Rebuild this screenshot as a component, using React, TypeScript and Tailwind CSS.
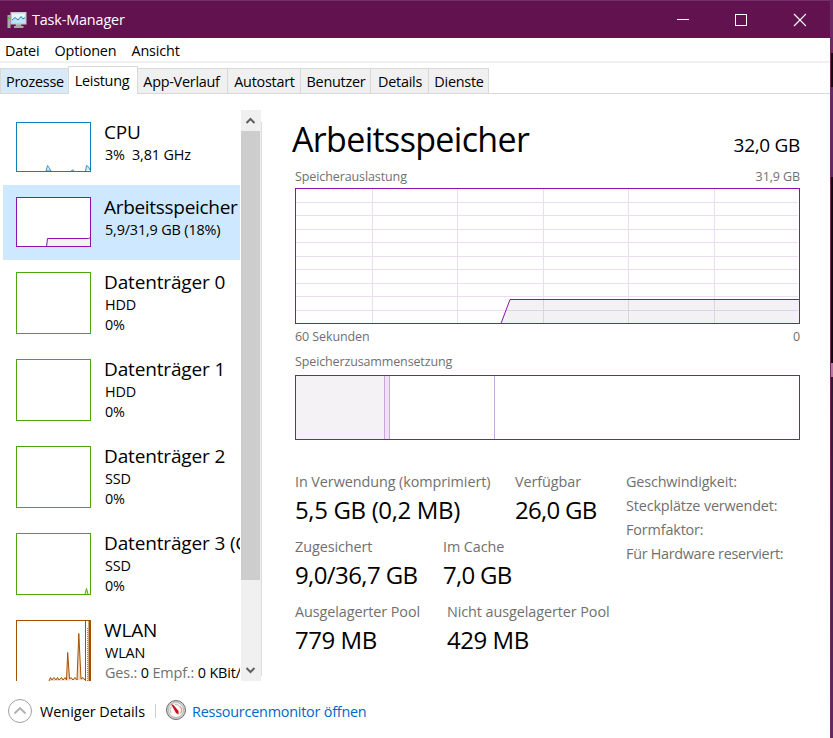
import React from "react";

type Device = {
  name: string;
  lines: React.ReactNode[];
  color: string;
  height: number;
  active?: boolean;
  graph?: React.ReactNode;
};

const menu = ["Datei", "Optionen", "Ansicht"];

const tabs = [
  { label: "Prozesse", style: "w-[68px] h-[25px] pt-[2px] pl-px border-l border-t bg-[#d8e9f8]" },
  { label: "Leistung", style: "w-[70px] h-[28px] pr-[2px] border-x border-t bg-white -mb-px" },
  { label: "App-Verlauf", style: "w-[90px] h-[25px] pt-[2px] pr-[2px] border-r border-t bg-[#f0f0f0]" },
  { label: "Autostart", style: "w-[73px] h-[25px] pt-[2px] pl-px border-r border-t bg-[#f0f0f0]" },
  { label: "Benutzer", style: "w-[70px] h-[25px] pt-[2px] pl-px border-r border-t bg-[#f0f0f0]" },
  { label: "Details", style: "w-[58px] h-[25px] pt-[2px] pl-px border-r border-t bg-[#f0f0f0]" },
  { label: "Dienste", style: "w-[60px] h-[25px] pt-[2px] pl-px border-r border-t bg-[#f0f0f0]" },
];

const devices: Device[] = [
  {
    name: "CPU",
    lines: ["3%  3,81 GHz"],
    color: "#117dbb",
    height: 50,
    graph: (
      <path d="M30 49 L31.5 43.5 L33 45.5 L35 49 Z M55 49 L57 47.8 L58 49 M69.5 49 L70.5 43.5 L73 45.5 L74 48" fill="#d5e8f4" stroke="#117dbb" strokeWidth="0.8" />
    ),
  },
  {
    name: "Arbeitsspeicher",
    lines: ["5,9/31,9 GB (18%)"],
    color: "#8b12ae",
    height: 50,
    active: true,
    graph: <path d="M30.5 49.5 L31.5 41.5 H72.5 L74.5 40.5 V49.5" fill="#f4f2f4" stroke="#8b12ae" />,
  },
  { name: "Datenträger 0", lines: ["HDD", "0%"], color: "#4da60c", height: 62 },
  { name: "Datenträger 1", lines: ["HDD", "0%"], color: "#4da60c", height: 62 },
  { name: "Datenträger 2", lines: ["SSD", "0%"], color: "#4da60c", height: 62 },
  {
    name: "Datenträger 3 (C:)",
    lines: ["SSD", "0%"],
    color: "#4da60c",
    height: 62,
    graph: <path d="M69 61 L70.5 55.5 L72 61" fill="#dcedce" stroke="#4da60c" />,
  },
  {
    name: "WLAN",
    lines: [
      "WLAN",
      <>
        <span className="text-[#707070]">Ges.:</span> 0 <span className="text-[#707070]">Empf.:</span> 0 KBit/s
      </>,
    ],
    color: "#a74f01",
    height: 62,
    graph: (
      <>
        <path
          d="M33 61 L34.5 57.5 L36 60 L38 57.5 L40 60 L41.5 57.5 L43 60 L45.5 57.5 L47 60 L49 57.5 L50.5 60 L51.7 32.5 L53.5 59 L55 57.5 L57 60 L59 57.5 L61 60 L62.8 13.5 L65 59 L67 57.5 L69 60"
          fill="#edd9c6"
          stroke="#a74f01"
        />
        <path d="M69.5 61 V0.5 H74" fill="none" stroke="#a74f01" />
        <path d="M71.5 61 V8" stroke="#d9693a" strokeDasharray="1 1" />
        <path d="M73.5 61 V1" stroke="#a74f01" strokeWidth="2" />
      </>
    ),
  },
];

const stats = [
  [
    { label: "In Verwendung (komprimiert)", value: "5,5 GB (0,2 MB)", width: "w-[220px]", spacing: "tracking-[-0.35px]" },
    { label: "Verfügbar", value: "26,0 GB", width: "", spacing: "tracking-[-0.7px]" },
  ],
  [
    { label: "Zugesichert", value: "9,0/36,7 GB", width: "w-[148px]", spacing: "tracking-[-0.6px]" },
    { label: "Im Cache", value: "7,0 GB", width: "", spacing: "tracking-[-0.7px]" },
  ],
  [
    { label: "Ausgelagerter Pool", value: "779 MB", width: "w-[152px]", spacing: "tracking-[-0.45px]" },
    { label: "Nicht ausgelagerter Pool", value: "429 MB", width: "", spacing: "tracking-[-0.45px]" },
  ],
];

const details = ["Geschwindigkeit:", "Steckplätze verwendet:", "Formfaktor:", "Für Hardware reserviert:"];

const TitleBar: React.FC = () => (
  <div className="flex h-[38px] items-center border-t border-[#74306a] bg-[#62124f] text-white">
    <svg width="20" height="18" viewBox="0 0 20 18" className="ml-[7px] shrink-0">
      <rect x="0.5" y="4" width="3" height="13" fill="#a9a9a9" />
      <rect x="1" y="6" width="2" height="2" fill="#3cd52e" />
      <path d="M9 13 h5 l0.5 2 h2 v2 h-9.500 v-2 h1.500 Z" fill="#a8a8a8" />
      <rect x="3.500" y="1" width="16" height="12.500" fill="#c9cccd" />
      <rect x="5" y="2.500" width="13" height="9.500" fill="#e9f7fc" />
      <path d="M5 9 L8 6.500 L11 9 L14 5.500 L16 8 L18 6.500 V12 H5 Z" fill="#bde3f5" />
      <path d="M5 9 L8 6.500 L11 9 L14 5.500 L16 8 L18 6.500" fill="none" stroke="#2383b8" />
    </svg>
    <span className="ml-[5px]">Task-Manager</span>
    <svg width="130" height="14" viewBox="0 0 130 14" className="mr-[24px] ml-auto" fill="none" stroke="white">
      <path d="M1 6.5 H13" />
      <rect x="59.500" y="1.500" width="11" height="11" />
      <path d="M118 1 L130 13 M130 1 L118 13" strokeWidth="1.2" />
    </svg>
  </div>
);

const DeviceItem: React.FC<{ device: Device }> = ({ device }) => (
  <div className={`flex shrink-0 pl-[13px] ${device.height === 50 ? "h-[75px]" : "h-[87px]"} ${device.active ? "bg-[#cde8ff]" : ""}`}>
    <svg width="75" height={device.height} className="mt-3 shrink-0 bg-white">
      {device.graph}
      <rect x="0.5" y="0.5" width="74" height={device.height - 1} fill="none" stroke={device.color} />
    </svg>
    <div className="ml-[13px] pt-[10px] whitespace-pre">
      <div className={`text-[19px] leading-6 ${device.active ? "tracking-[-0.3px]" : "tracking-[-0.15px]"}`}>{device.name}</div>
      {device.lines.map((line, i) => (
        <div key={i} className={`pl-px ${i === 0 ? "leading-[22px]" : "leading-[17px]"}`}>{line}</div>
      ))}
    </div>
  </div>
);

const ScrollBar: React.FC = () => (
  <div className="ml-px flex w-5 flex-col bg-[#f0f0f0]">
    <svg width="20" height="21" fill="none" stroke="#606060" strokeWidth="2">
      <path d="M5.500 13 L9.500 9 L13.500 13" />
    </svg>
    <div className="h-[449px] w-[19px] bg-[#cdcdcd]" />
    <svg width="20" height="21" className="mt-auto" fill="none" stroke="#606060" strokeWidth="2">
      <path d="M5.500 8 L9.500 12 L13.500 8" />
    </svg>
  </div>
);

const MemoryGraph: React.FC = () => (
  <svg width="505" height="136" className="block" fill="none">
    <g stroke="#ecdef0">
      {[14, 27, 41, 54, 68, 81, 95, 108, 122].map((y) => (
        <path key={y} d={`M1 ${y + 0.5} H503`} />
      ))}
      {[77, 162, 248, 333, 419].map((x) => (
        <path key={x} d={`M${x + 0.5} 1 V135`} />
      ))}
    </g>
    <path d="M206 135.5 L215 111.5 H504 V135.5 Z" fill="#2a1535" fillOpacity="0.06" />
    <path d="M206 135.5 L215 111.5 H504" stroke="#8b12ae" />
    <rect x="0.5" y="0.5" width="504" height="135" stroke="#8b12ae" />
  </svg>
);

const App: React.FC = () => {
  return (
    <div className="flex h-[738px] w-[833px] overflow-hidden bg-white font-['Open_Sans','Noto_Sans',sans-serif] text-[14.4px] leading-5 tracking-[-0.15px] text-black">
      <div className="flex w-[830px] flex-col">
        <TitleBar />
        <div className="flex h-[25px] gap-[15px] border-b-2 border-[#f0f0f0] pt-[3px] pl-[5px]">
          {menu.map((item) => (
            <span key={item}>{item}</span>
          ))}
        </div>

        {/* tabs */}
        <div className="flex h-[31px] items-end border-b border-[#d9d9d9]">
          {tabs.map((tab) => (
            <div key={tab.label} className={`flex shrink-0 items-center justify-center whitespace-nowrap border-[#d9d9d9] tracking-[-0.25px] ${tab.style}`}>
              {tab.label}
            </div>
          ))}
        </div>

        <div className="flex h-[587px] pt-4">
          {/* device list */}
          <div className="ml-[3px] flex w-[237px] flex-col overflow-hidden">
            {devices.map((device) => (
              <DeviceItem key={device.name} device={device} />
            ))}
          </div>
          <ScrollBar />
          <div className="mt-3 mb-[5px] w-px bg-[#dcdcdc]" />

          {/* memory */}
          <div className="ml-[33px] w-[505px]">
            <div className="flex h-[57px] items-baseline justify-between">
              <h1 className="-ml-[3px] text-[34px] leading-[58px] tracking-[-0.65px]">Arbeitsspeicher</h1>
              <span className="text-[19px] tracking-[-0.3px]">32,0 GB</span>
            </div>
            <div className="flex h-[21px] justify-between text-[12.5px] tracking-[-0.1px] text-[#707070]">
              <span>Speicherauslastung</span>
              <span>31,9 GB</span>
            </div>
            <MemoryGraph />
            <div className="mt-[3px] flex justify-between text-[12.5px] tracking-[-0.1px] text-[#707070]">
              <span>60 Sekunden</span>
              <span>0</span>
            </div>
            <div className="mt-[5px] h-[23px] text-[12.5px] tracking-[-0.13px] text-[#707070]">Speicherzusammensetzung</div>
            <div className="flex h-[65px] border border-[#8b12ae]">
              <div className="w-[88px] bg-[#f4f2f4]" />
              <div className="w-[6px] border-x border-[#cba9d6] bg-[#efe3f3]" />
              <div className="w-[105px] border-r border-[#cba9d6]" />
            </div>

            <div className="mt-[31px] flex whitespace-nowrap">
              <div className="w-[331px] shrink-0">
                {stats.map((row, i) => (
                  <div key={i} className="flex h-[65px]">
                    {row.map((stat) => (
                      <div key={stat.label} className={`shrink-0 ${stat.width}`}>
                        <div className="leading-[22px] tracking-[-0.08px] text-[#707070]">{stat.label}</div>
                        <div className={`text-[24px] leading-[34px] ${stat.spacing}`}>{stat.value}</div>
                      </div>
                    ))}
                  </div>
                ))}
              </div>
              <div className="-mt-px leading-6 text-[#707070]">
                {details.map((item) => (
                  <div key={item} className="last:tracking-[-0.3px]">{item}</div>
                ))}
              </div>
            </div>
          </div>
        </div>

        {/* footer */}
        <div className="flex h-[57px] items-center pt-[3px] pl-2">
          <svg width="24" height="24" fill="none" stroke="#a0a0a0">
            <circle cx="12" cy="12" r="11.500" />
            <path d="M6.500 14.500 L12 9 L17.500 14.500" strokeWidth="1.8" stroke="#b0b0b0" />
          </svg>
          <span className="ml-2 w-[115px] pt-[2px] tracking-[0px]">Weniger Details</span>
          <div className="mb-px h-[14px] w-px bg-[#d0d0d0]" />
          <svg width="20" height="20" viewBox="0 0 20 20" className="mb-[2px] ml-[10px]">
            <circle cx="10" cy="10" r="9.500" fill="#d2d2d2" stroke="#6c6c6c" />
            <circle cx="10" cy="10" r="7.500" fill="#f8f8f6" stroke="#8d8d8d" strokeWidth="0.5" />
            <path d="M5 13 A5.500 5.500 0 0 1 5.500 6.500 M9 4.500 A5.500 5.500 0 0 1 14 6.500" fill="none" stroke="#b9b9b9" />
            <path d="M14 6.500 A5.500 5.500 0 0 1 14.500 13.500" fill="none" stroke="#d9a274" strokeWidth="1.2" />
            <path d="M5 4 L7.500 5 L12.500 11 L12.500 14.500 L10 13 Z" fill="#c8101c" />
          </svg>
          <span className="ml-[6px] pt-[2px] tracking-[-0.22px] text-[#0066cc]">Ressourcenmonitor öffnen</span>
        </div>
      </div>

      {/* desktop behind the window */}
      <div className="flex w-[3px] flex-col border-l border-[#6d2a5f]">
        <div className="h-[53px] bg-[#6a2866]" />
        <div className="h-[34px] bg-[#120a12]" />
        <div className="h-[90px] bg-[#5b2a68]" />
        <div className="h-[186px] bg-[#0c0612]" />
        <div className="h-[14px] bg-[#b877a8]" />
        <div className="grow bg-linear-to-b from-[#2a1a35] to-[#5d2a68]" />
      </div>
    </div>
  );
};

export default App;
